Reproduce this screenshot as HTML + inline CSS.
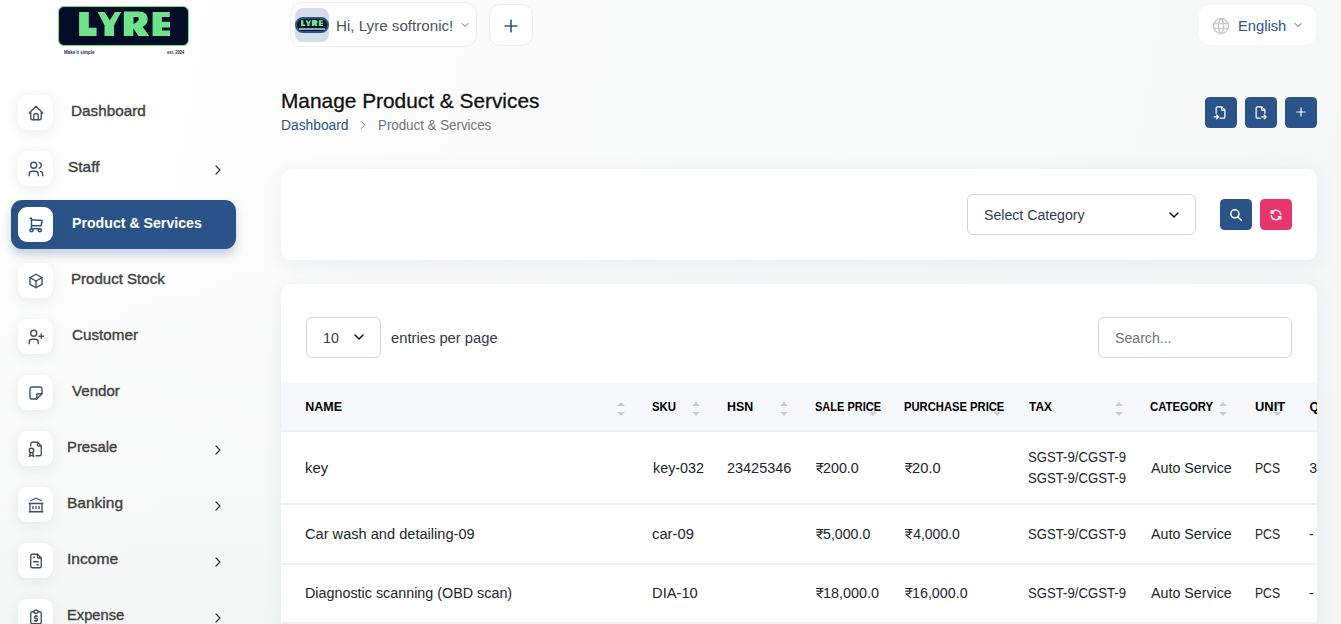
<!DOCTYPE html>
<html><head><meta charset="utf-8">
<style>*{box-sizing:border-box;margin:0;padding:0}
html,body{width:1341px;height:624px;overflow:hidden}
body{font-family:"Liberation Sans",sans-serif;background:linear-gradient(180deg,rgba(245,247,246,0) 30%,rgba(245,247,246,1) 100%),linear-gradient(100deg,#ffffff 0%,#fcfcfc 30%,#f9fafa 55%,#f6f8f8 100%);position:relative;color:#333}
.abs{position:absolute}
.t{position:absolute;white-space:nowrap;transform-origin:0 0}
.side{display:none}
.logo{position:absolute;left:58px;top:6px;width:131px;height:40px;background:#050c28;border:1.5px solid #6fe37b;border-radius:6px}
.tag{position:absolute;top:50px;font-size:4.6px;line-height:5px;color:#333a55}
.ibox{position:absolute;left:18px;width:35px;height:35px;border-radius:9px;background:#fff;box-shadow:0 3px 14px rgba(20,30,60,0.075)}
.ibox svg{position:absolute;left:8.5px;top:9.3px}
.active{position:absolute;left:11px;top:200px;width:225px;height:49px;background:#2a5489;border-radius:11px;box-shadow:0 6px 10px rgba(42,84,137,0.25)}
.pill{position:absolute;left:290px;top:2.4px;width:187px;height:45px;background:#fff;border:1px solid #eceef0;border-radius:12px}
.avatar{position:absolute;left:295px;top:7.8px;width:34px;height:34px;background:#d3dde7;border-radius:8px}
.plusbtn{position:absolute;left:488.5px;top:4.4px;width:44px;height:41.3px;background:#fff;border:1px solid #eeeff1;border-radius:11px}
.lang{position:absolute;left:1199px;top:4.8px;width:117px;height:40.3px;background:#fff;border-radius:12px}
.btn{position:absolute;width:32px;height:31px;background:#2a5489;border-radius:4.5px}
.card{position:absolute;background:#fff;border-radius:10px;box-shadow:0 4px 20px rgba(40,50,90,0.08)}
.sel{position:absolute;background:#fff;border:1px solid #cfd5dd;border-radius:6px}
</style></head><body>
<div class="side"></div>
<div class="logo"></div>
<svg class="abs" style="left:0;top:0" width="255" height="60" viewBox="0 0 255 60"><g fill="#6fe38a"><path d="M79.1 12.1H88.8V27.8H96.6V36H79.1Z"/><path d="M97.7 12.1H104.5L109.8 20.2L114.9 12.1H121.2L114.1 25.2V36H104.5V25.2Z"/><path fill-rule="evenodd" d="M123.8 11.6H138.5C144.8 11.6 147.7 14.6 147.7 19C147.7 23 145.4 25.6 142.6 26.8L149.2 36H138.4L133.4 28.2V36H123.8Z M133.5 17.4C135.6 16.9 138.8 16.6 138.8 18.6C138.8 21 135.8 23.3 133.5 23.9Z"/><path d="M152.6 12.1H169.7V17H161.9V21.8H170V27.4H161.9V30.4H170V36H152.6Z"/></g></svg>
<div class="t" style="left:63.71px;top:49.07px;font-size:5px;line-height:6px;color:#2b3150;font-weight:bold;transform:scaleX(0.8909);">Make it simple</div>
<div class="t" style="left:167.14px;top:49.07px;font-size:5px;line-height:6px;color:#2b3150;font-weight:bold;transform:scaleX(0.8134);">est. 2024</div>
<div class="active"></div>
<div class="ibox" style="top:95px"><svg viewBox="0 0 24 24" width="18" height="18" fill="none" stroke="#434e5e" stroke-width="1.8" stroke-linecap="round" stroke-linejoin="round" ><path d="M5 12l-2 0l9 -9l9 9l-2 0"/><path d="M5 12v7a2 2 0 0 0 2 2h10a2 2 0 0 0 2 -2v-7"/><path d="M9 21v-6a2 2 0 0 1 2 -2h2a2 2 0 0 1 2 2v6"/></svg></div>
<div class="t" style="left:71.48px;top:101.75px;font-size:14.3px;line-height:19px;color:#404040;transform:scaleX(1.0685);-webkit-text-stroke:0.35px #404040;">Dashboard</div>
<div class="ibox" style="top:151px"><svg viewBox="0 0 24 24" width="18" height="18" fill="none" stroke="#434e5e" stroke-width="1.8" stroke-linecap="round" stroke-linejoin="round" ><path d="M5 7a4 4 0 1 0 8 0a4 4 0 1 0 -8 0"/><path d="M3 21v-2a4 4 0 0 1 4 -4h4a4 4 0 0 1 4 4v2"/><path d="M16 3.13a4 4 0 0 1 0 7.75"/><path d="M21 21v-2a4 4 0 0 0 -3 -3.85"/></svg></div>
<div class="t" style="left:67.71px;top:157.75px;font-size:14.3px;line-height:19px;color:#404040;transform:scaleX(1.0796);-webkit-text-stroke:0.35px #404040;">Staff</div>
<div class="abs" style="left:210px;top:162px;"><svg viewBox="0 0 24 24" width="16" height="16" fill="none" stroke="#333" stroke-width="1.8" stroke-linecap="round" stroke-linejoin="round" ><path d="M9 6l6 6l-6 6"/></svg></div>
<div class="ibox" style="top:207px"><svg viewBox="0 0 24 24" width="18" height="18" fill="none" stroke="#2a5489" stroke-width="2" stroke-linecap="round" stroke-linejoin="round" ><path d="M4 19a2 2 0 1 0 4 0a2 2 0 1 0 -4 0"/><path d="M15 19a2 2 0 1 0 4 0a2 2 0 1 0 -4 0"/><path d="M17 17h-11v-14h-2"/><path d="M6 5l14 1l-1 7h-13"/></svg></div>
<div class="t" style="left:71.78px;top:214.35px;font-size:14px;line-height:18px;color:#fff;font-weight:bold;transform:scaleX(1.0110);">Product &amp; Services</div>
<div class="ibox" style="top:263px"><svg viewBox="0 0 24 24" width="18" height="18" fill="none" stroke="#434e5e" stroke-width="1.8" stroke-linecap="round" stroke-linejoin="round" ><path d="M12 3l8 4.5l0 9l-8 4.5l-8 -4.5l0 -9l8 -4.5"/><path d="M12 12l8 -4.5"/><path d="M12 12l0 9"/><path d="M12 12l-8 -4.5"/></svg></div>
<div class="t" style="left:71.30px;top:269.75px;font-size:14.3px;line-height:19px;color:#404040;transform:scaleX(1.0526);-webkit-text-stroke:0.35px #404040;">Product Stock</div>
<div class="ibox" style="top:319px"><svg viewBox="0 0 24 24" width="18" height="18" fill="none" stroke="#434e5e" stroke-width="1.8" stroke-linecap="round" stroke-linejoin="round" ><path d="M5 7a4 4 0 1 0 8 0a4 4 0 1 0 -8 0"/><path d="M3 21v-2a4 4 0 0 1 4 -4h4a4 4 0 0 1 4 4v2"/><path d="M16 11h6m-3 -3v6"/></svg></div>
<div class="t" style="left:71.74px;top:325.75px;font-size:14.3px;line-height:19px;color:#404040;transform:scaleX(1.0641);-webkit-text-stroke:0.35px #404040;">Customer</div>
<div class="ibox" style="top:375px"><svg viewBox="0 0 24 24" width="18" height="18" fill="none" stroke="#434e5e" stroke-width="1.8" stroke-linecap="round" stroke-linejoin="round" ><path d="M13 20l7 -7"/><path d="M13 20v-6a1 1 0 0 1 1 -1h6v-7a2 2 0 0 0 -2 -2h-12a2 2 0 0 0 -2 2v12a2 2 0 0 0 2 2h7"/></svg></div>
<div class="t" style="left:72.42px;top:381.75px;font-size:14.3px;line-height:19px;color:#404040;transform:scaleX(1.0562);-webkit-text-stroke:0.35px #404040;">Vendor</div>
<div class="ibox" style="top:431px"><svg viewBox="0 0 24 24" width="18" height="18" fill="none" stroke="#434e5e" stroke-width="1.8" stroke-linecap="round" stroke-linejoin="round" ><path d="M14 3v4a1 1 0 0 0 1 1h4"/><path d="M5 8v-3a2 2 0 0 1 2 -2h7l5 5v11a2 2 0 0 1 -2 2h-5"/><path d="M3 14a3 3 0 1 0 6 0a3 3 0 1 0 -6 0"/><path d="M4.5 17l-1.5 5l3 -1.5l3 1.5l-1.5 -5"/></svg></div>
<div class="t" style="left:67.21px;top:437.75px;font-size:14.3px;line-height:19px;color:#404040;transform:scaleX(1.0388);-webkit-text-stroke:0.35px #404040;">Presale</div>
<div class="abs" style="left:210px;top:442px;"><svg viewBox="0 0 24 24" width="16" height="16" fill="none" stroke="#333" stroke-width="1.8" stroke-linecap="round" stroke-linejoin="round" ><path d="M9 6l6 6l-6 6"/></svg></div>
<div class="ibox" style="top:487px"><svg viewBox="0 0 24 24" width="18" height="18" fill="none" stroke="#434e5e" stroke-width="1.8" stroke-linecap="round" stroke-linejoin="round" ><path d="M3 21l18 0"/><path d="M3 10l18 0"/><path d="M5 6l7 -3l7 3"/><path d="M4 10l0 11"/><path d="M20 10l0 11"/><path d="M8 14l0 3"/><path d="M12 14l0 3"/><path d="M16 14l0 3"/></svg></div>
<div class="t" style="left:67.16px;top:493.75px;font-size:14.3px;line-height:19px;color:#404040;transform:scaleX(1.0842);-webkit-text-stroke:0.35px #404040;">Banking</div>
<div class="abs" style="left:210px;top:498px;"><svg viewBox="0 0 24 24" width="16" height="16" fill="none" stroke="#333" stroke-width="1.8" stroke-linecap="round" stroke-linejoin="round" ><path d="M9 6l6 6l-6 6"/></svg></div>
<div class="ibox" style="top:543px"><svg viewBox="0 0 24 24" width="18" height="18" fill="none" stroke="#434e5e" stroke-width="1.8" stroke-linecap="round" stroke-linejoin="round" ><path d="M14 3v4a1 1 0 0 0 1 1h4"/><path d="M17 21h-10a2 2 0 0 1 -2 -2v-14a2 2 0 0 1 2 -2h7l5 5v11a2 2 0 0 1 -2 2z"/><path d="M9 7l1 0"/><path d="M9 13l6 0"/><path d="M13 17l2 0"/></svg></div>
<div class="t" style="left:67.00px;top:549.75px;font-size:14.3px;line-height:19px;color:#404040;transform:scaleX(1.0895);-webkit-text-stroke:0.35px #404040;">Income</div>
<div class="abs" style="left:210px;top:554px;"><svg viewBox="0 0 24 24" width="16" height="16" fill="none" stroke="#333" stroke-width="1.8" stroke-linecap="round" stroke-linejoin="round" ><path d="M9 6l6 6l-6 6"/></svg></div>
<div class="ibox" style="top:599px"><svg viewBox="0 0 24 24" width="18" height="18" fill="none" stroke="#434e5e" stroke-width="1.8" stroke-linecap="round" stroke-linejoin="round" ><path d="M9 5h-2a2 2 0 0 0 -2 2v12a2 2 0 0 0 2 2h10a2 2 0 0 0 2 -2v-12a2 2 0 0 0 -2 -2h-2"/><path d="M9 5a2 2 0 0 1 2 -2h2a2 2 0 0 1 2 2v0a2 2 0 0 1 -2 2h-2a2 2 0 0 1 -2 -2z"/><path d="M14 11h-2.5a1.5 1.5 0 0 0 0 3h1a1.5 1.5 0 0 1 0 3h-2.5"/><path d="M12 17v1m0 -8v1"/></svg></div>
<div class="t" style="left:67.22px;top:605.75px;font-size:14.3px;line-height:19px;color:#404040;transform:scaleX(1.0271);-webkit-text-stroke:0.35px #404040;">Expense</div>
<div class="abs" style="left:210px;top:610px;"><svg viewBox="0 0 24 24" width="16" height="16" fill="none" stroke="#333" stroke-width="1.8" stroke-linecap="round" stroke-linejoin="round" ><path d="M9 6l6 6l-6 6"/></svg></div>
<div class="pill"></div>
<div class="avatar"></div>
<div class="abs" style="left:295px;top:17px;width:34px;height:15.6px;border-radius:8px;background:#07142a;border:2px solid #2a5489;overflow:hidden"><div class="abs" style="left:2px;right:2px;bottom:1px;height:1.2px;background:#8fa3b8"></div></div>
<svg class="abs" style="left:301px;top:19.8px" width="22" height="6.6" viewBox="79 11.6 91 24.4" preserveAspectRatio="none"><g fill="#6fe38a"><path d="M79.1 12.1H88.8V27.8H96.6V36H79.1Z"/><path d="M97.7 12.1H104.5L109.8 20.2L114.9 12.1H121.2L114.1 25.2V36H104.5V25.2Z"/><path d="M123.8 11.6H138.5C144.8 11.6 147.7 14.6 147.7 19C147.7 23 145.4 25.6 142.6 26.8L149.2 36H138.4L133.4 28.2V36H123.8Z"/><path d="M152.6 12.1H169.7V17H161.9V21.8H170V27.4H161.9V30.4H170V36H152.6Z"/></g></svg>
<div class="t" style="left:336.29px;top:15.70px;font-size:15px;line-height:20px;color:#4b5563;transform:scaleX(1.0101);">Hi, Lyre softronic!</div>
<div class="abs" style="left:459.3px;top:17.4px;"><svg viewBox="0 0 24 24" width="12" height="12" fill="none" stroke="#50586a" stroke-width="1.7" stroke-linecap="round" stroke-linejoin="round" ><path d="M6 9l6 6l6 -6"/></svg></div>
<div class="plusbtn"></div>
<div class="abs" style="left:500.6px;top:16px;"><svg viewBox="0 0 24 24" width="20" height="20" fill="none" stroke="#2a5489" stroke-width="1.9" stroke-linecap="round" stroke-linejoin="round" ><path d="M12 5l0 14"/><path d="M5 12l14 0"/></svg></div>
<div class="lang"></div>
<div class="abs" style="left:1210.5px;top:16px;"><svg viewBox="0 0 24 24" width="20" height="20" fill="none" stroke="#c9c9c9" stroke-width="1.7" stroke-linecap="round" stroke-linejoin="round" ><path d="M3 12a9 9 0 1 0 18 0a9 9 0 0 0 -18 0"/><path d="M3.6 9h16.8"/><path d="M3.6 15h16.8"/><path d="M11.5 3a17 17 0 0 0 0 18"/><path d="M12.5 3a17 17 0 0 1 0 18"/></svg></div>
<div class="t" style="left:1237.92px;top:16.87px;font-size:14.8px;line-height:19px;color:#2a5489;transform:scaleX(0.9936);">English</div>
<div class="abs" style="left:1292px;top:17.3px;"><svg viewBox="0 0 24 24" width="12" height="12" fill="none" stroke="#454a55" stroke-width="1.8" stroke-linecap="round" stroke-linejoin="round" ><path d="M6 9l6 6l6 -6"/></svg></div>
<div class="t" style="left:280.83px;top:88.14px;font-size:19.8px;line-height:26px;color:#111;transform:scaleX(1.0541);-webkit-text-stroke:0.3px #111;">Manage Product &amp; Services</div>
<div class="t" style="left:280.90px;top:116.05px;font-size:14px;line-height:18px;color:#2a5489;transform:scaleX(0.9860);">Dashboard</div>
<div class="abs" style="left:355.8px;top:118px;"><svg viewBox="0 0 24 24" width="14" height="14" fill="none" stroke="#6c757d" stroke-width="1.5" stroke-linecap="round" stroke-linejoin="round" ><path d="M9 6l6 6l-6 6"/></svg></div>
<div class="t" style="left:377.63px;top:116.05px;font-size:14px;line-height:18px;color:#6c757d;transform:scaleX(0.9510);">Product &amp; Services</div>
<div class="btn" style="left:1205px;top:97px"><div class="abs" style="left:8.2px;top:8px"><svg viewBox="0 0 24 24" width="15" height="15" fill="none" stroke="#fff" stroke-width="2" stroke-linecap="round" stroke-linejoin="round" ><path d="M14 3v4a1 1 0 0 0 1 1h4"/><path d="M5 13v-8a2 2 0 0 1 2 -2h7l5 5v11a2 2 0 0 1 -2 2h-5.5m-9.5 -2h7m-3 -3l3 3l-3 3"/></svg></div></div>
<div class="btn" style="left:1245px;top:97px"><div class="abs" style="left:8.2px;top:8px"><svg viewBox="0 0 24 24" width="15" height="15" fill="none" stroke="#fff" stroke-width="2" stroke-linecap="round" stroke-linejoin="round" ><path d="M14 3v4a1 1 0 0 0 1 1h4"/><path d="M11.5 21h-4.5a2 2 0 0 1 -2 -2v-14a2 2 0 0 1 2 -2h7l5 5v5m-5 6h7m-3 -3l3 3l-3 3"/></svg></div></div>
<div class="btn" style="left:1285px;top:97px"><div class="abs" style="left:9px;top:8.3px"><svg viewBox="0 0 24 24" width="14" height="14" fill="none" stroke="#fff" stroke-width="2.1" stroke-linecap="round" stroke-linejoin="round" ><path d="M12 5l0 14"/><path d="M5 12l14 0"/></svg></div></div>
<div class="card" style="left:281px;top:169px;width:1036px;height:91px"></div>
<div class="sel" style="left:967px;top:194px;width:229px;height:41px"></div>
<div class="t" style="left:984.06px;top:205.85px;font-size:14px;line-height:18px;color:#333a47;transform:scaleX(1.0100);">Select Category</div>
<div class="abs" style="left:1166px;top:207px;"><svg viewBox="0 0 24 24" width="16" height="16" fill="none" stroke="#111" stroke-width="2.2" stroke-linecap="round" stroke-linejoin="round" ><path d="M6 9l6 6l6 -6"/></svg></div>
<div class="btn" style="left:1220px;top:199px"><div class="abs" style="left:9px;top:8.5px"><svg viewBox="0 0 24 24" width="14" height="14" fill="none" stroke="#fff" stroke-width="2.6" stroke-linecap="round" stroke-linejoin="round" ><path d="M3 10a7 7 0 1 0 14 0a7 7 0 1 0 -14 0"/><path d="M21 21l-6 -6"/></svg></div></div>
<div class="btn" style="left:1260px;top:199px;background:#e8356d"><div class="abs" style="left:9px;top:8.5px"><svg viewBox="0 0 24 24" width="14" height="14" fill="none" stroke="#fff" stroke-width="2.4" stroke-linecap="round" stroke-linejoin="round" ><path d="M20 11a8.1 8.1 0 0 0 -15.5 -2m-.5 -4v4h4"/><path d="M4 13a8.1 8.1 0 0 0 15.5 2m.5 4v-4h-4"/></svg></div></div>
<div class="card" style="left:281px;top:284px;width:1036px;height:360px"></div>
<div class="sel" style="left:306px;top:317px;width:75px;height:41px"></div>
<div class="t" style="left:323.13px;top:329.15px;font-size:14px;line-height:18px;color:#333a47;transform:scaleX(1.0194);">10</div>
<div class="abs" style="left:351px;top:329px;"><svg viewBox="0 0 24 24" width="16" height="16" fill="none" stroke="#111" stroke-width="2.2" stroke-linecap="round" stroke-linejoin="round" ><path d="M6 9l6 6l6 -6"/></svg></div>
<div class="t" style="left:390.84px;top:329.15px;font-size:14px;line-height:18px;color:#333a47;transform:scaleX(1.0542);">entries per page</div>
<div class="sel" style="left:1098px;top:317px;width:194px;height:41px"></div>
<div class="t" style="left:1114.76px;top:329.05px;font-size:14px;line-height:18px;color:#6b7280;transform:scaleX(1.0091);">Search...</div>
<div class="abs" style="left:0;top:0;width:1317px;height:624px;overflow:hidden">
<div class="abs" style="left:281px;top:383px;width:1036px;height:47px;background:#f6f8fc"></div>
<div class="abs" style="left:281px;top:430px;width:1036px;height:2px;background:#efefef"></div>
<div class="abs" style="left:617px;top:402.4px;width:0;height:0;border-left:4px solid transparent;border-right:4px solid transparent;border-bottom:4px solid #c9cbcf"></div><div class="abs" style="left:617px;top:412px;width:0;height:0;border-left:4px solid transparent;border-right:4px solid transparent;border-top:4px solid #c9cbcf"></div>
<div class="t" style="left:305.19px;top:398.57px;font-size:12.5px;line-height:16px;color:#000;font-weight:bold;">NAME</div>
<div class="abs" style="left:692px;top:402.4px;width:0;height:0;border-left:4px solid transparent;border-right:4px solid transparent;border-bottom:4px solid #c9cbcf"></div><div class="abs" style="left:692px;top:412px;width:0;height:0;border-left:4px solid transparent;border-right:4px solid transparent;border-top:4px solid #c9cbcf"></div>
<div class="t" style="left:652.46px;top:398.57px;font-size:12.5px;line-height:16px;color:#000;font-weight:bold;transform:scaleX(0.9109);">SKU</div>
<div class="abs" style="left:780px;top:402.4px;width:0;height:0;border-left:4px solid transparent;border-right:4px solid transparent;border-bottom:4px solid #c9cbcf"></div><div class="abs" style="left:780px;top:412px;width:0;height:0;border-left:4px solid transparent;border-right:4px solid transparent;border-top:4px solid #c9cbcf"></div>
<div class="t" style="left:727.10px;top:398.57px;font-size:12.5px;line-height:16px;color:#000;font-weight:bold;transform:scaleX(0.9899);">HSN</div>
<div class="abs" style="left:869px;top:402.4px;width:0;height:0;border-left:4px solid transparent;border-right:4px solid transparent;border-bottom:4px solid #c9cbcf"></div><div class="abs" style="left:869px;top:412px;width:0;height:0;border-left:4px solid transparent;border-right:4px solid transparent;border-top:4px solid #c9cbcf"></div>
<div class="t" style="left:815.37px;top:398.57px;font-size:12.5px;line-height:16px;color:#000;font-weight:bold;transform:scaleX(0.8802);">SALE PRICE</div>
<div class="abs" style="left:993px;top:402.4px;width:0;height:0;border-left:4px solid transparent;border-right:4px solid transparent;border-bottom:4px solid #c9cbcf"></div><div class="abs" style="left:993px;top:412px;width:0;height:0;border-left:4px solid transparent;border-right:4px solid transparent;border-top:4px solid #c9cbcf"></div>
<div class="t" style="left:904.37px;top:398.57px;font-size:12.5px;line-height:16px;color:#000;font-weight:bold;transform:scaleX(0.8972);">PURCHASE PRICE</div>
<div class="abs" style="left:1115px;top:402.4px;width:0;height:0;border-left:4px solid transparent;border-right:4px solid transparent;border-bottom:4px solid #c9cbcf"></div><div class="abs" style="left:1115px;top:412px;width:0;height:0;border-left:4px solid transparent;border-right:4px solid transparent;border-top:4px solid #c9cbcf"></div>
<div class="t" style="left:1028.98px;top:398.57px;font-size:12.5px;line-height:16px;color:#000;font-weight:bold;transform:scaleX(0.9533);">TAX</div>
<div class="abs" style="left:1218.7px;top:402.4px;width:0;height:0;border-left:4px solid transparent;border-right:4px solid transparent;border-bottom:4px solid #c9cbcf"></div><div class="abs" style="left:1218.7px;top:412px;width:0;height:0;border-left:4px solid transparent;border-right:4px solid transparent;border-top:4px solid #c9cbcf"></div>
<div class="t" style="left:1150.45px;top:398.57px;font-size:12.5px;line-height:16px;color:#000;font-weight:bold;transform:scaleX(0.9091);">CATEGORY</div>
<div class="abs" style="left:1272.5px;top:402.4px;width:0;height:0;border-left:4px solid transparent;border-right:4px solid transparent;border-bottom:4px solid #c9cbcf"></div><div class="abs" style="left:1272.5px;top:412px;width:0;height:0;border-left:4px solid transparent;border-right:4px solid transparent;border-top:4px solid #c9cbcf"></div>
<div class="t" style="left:1255.02px;top:398.57px;font-size:12.5px;line-height:16px;color:#000;font-weight:bold;transform:scaleX(1.0336);">UNIT</div>
<div class="t" style="left:1309.50px;top:398.57px;font-size:12.5px;line-height:16px;color:#000;font-weight:bold;">Q</div>
<div class="abs" style="left:281px;top:503px;width:1036px;height:2px;background:#efefef"></div>
<div class="abs" style="left:281px;top:562.5px;width:1036px;height:2px;background:#efefef"></div>
<div class="abs" style="left:281px;top:621.5px;width:1036px;height:2px;background:#efefef"></div>
<div class="t" style="left:305.34px;top:459.05px;font-size:14px;line-height:18px;color:#212529;transform:scaleX(1.0582);">key</div>
<div class="t" style="left:652.67px;top:459.05px;font-size:14px;line-height:18px;color:#212529;transform:scaleX(1.0237);">key-032</div>
<div class="t" style="left:727.18px;top:459.05px;font-size:14px;line-height:18px;color:#212529;transform:scaleX(1.0317);">23425346</div>
<div class="abs" style="left:815.8px;top:463px;width:8px;height:11px"><svg width="8" height="11" viewBox="0 0 8 11" fill="none" stroke="#212529" stroke-width="1.05" style="position:absolute;left:0;top:0"><path d="M0.3 0.5H7.4M0.3 3.1H7.4"/><path d="M0.7 0.5H2.7C5.9 0.5 5.9 5.8 2.7 5.8H0.9L6.2 10.2" stroke-linejoin="round"/></svg></div>
<div class="t" style="left:823.19px;top:459.05px;font-size:14px;line-height:18px;color:#212529;transform:scaleX(1.0196);">200.0</div>
<div class="abs" style="left:905px;top:463px;width:8px;height:11px"><svg width="8" height="11" viewBox="0 0 8 11" fill="none" stroke="#212529" stroke-width="1.05" style="position:absolute;left:0;top:0"><path d="M0.3 0.5H7.4M0.3 3.1H7.4"/><path d="M0.7 0.5H2.7C5.9 0.5 5.9 5.8 2.7 5.8H0.9L6.2 10.2" stroke-linejoin="round"/></svg></div>
<div class="t" style="left:912.36px;top:459.05px;font-size:14px;line-height:18px;color:#212529;transform:scaleX(1.0512);">20.0</div>
<div class="t" style="left:1028.41px;top:448.15px;font-size:14px;line-height:18px;color:#212529;transform:scaleX(0.9401);">SGST-9/CGST-9</div>
<div class="t" style="left:1028.41px;top:468.75px;font-size:14px;line-height:18px;color:#212529;transform:scaleX(0.9401);">SGST-9/CGST-9</div>
<div class="t" style="left:1150.83px;top:459.05px;font-size:14px;line-height:18px;color:#212529;transform:scaleX(1.0180);">Auto Service</div>
<div class="t" style="left:1255.03px;top:459.05px;font-size:14px;line-height:18px;color:#212529;transform:scaleX(0.8697);">PCS</div>
<div class="t" style="left:1309.14px;top:459.05px;font-size:14px;line-height:18px;color:#212529;">3</div>
<div class="t" style="left:305.37px;top:525.15px;font-size:14px;line-height:18px;color:#212529;transform:scaleX(1.0429);">Car wash and detailing-09</div>
<div class="t" style="left:652.03px;top:525.15px;font-size:14px;line-height:18px;color:#212529;transform:scaleX(1.0565);">car-09</div>
<div class="abs" style="left:815.7px;top:529px;width:8px;height:11px"><svg width="8" height="11" viewBox="0 0 8 11" fill="none" stroke="#212529" stroke-width="1.05" style="position:absolute;left:0;top:0"><path d="M0.3 0.5H7.4M0.3 3.1H7.4"/><path d="M0.7 0.5H2.7C5.9 0.5 5.9 5.8 2.7 5.8H0.9L6.2 10.2" stroke-linejoin="round"/></svg></div>
<div class="t" style="left:823.23px;top:525.15px;font-size:14px;line-height:18px;color:#212529;transform:scaleX(1.0116);">5,000.0</div>
<div class="abs" style="left:905.4px;top:529px;width:8px;height:11px"><svg width="8" height="11" viewBox="0 0 8 11" fill="none" stroke="#212529" stroke-width="1.05" style="position:absolute;left:0;top:0"><path d="M0.3 0.5H7.4M0.3 3.1H7.4"/><path d="M0.7 0.5H2.7C5.9 0.5 5.9 5.8 2.7 5.8H0.9L6.2 10.2" stroke-linejoin="round"/></svg></div>
<div class="t" style="left:913.15px;top:525.15px;font-size:14px;line-height:18px;color:#212529;">4,000.0</div>
<div class="t" style="left:1028.41px;top:525.15px;font-size:14px;line-height:18px;color:#212529;transform:scaleX(0.9401);">SGST-9/CGST-9</div>
<div class="t" style="left:1150.83px;top:525.15px;font-size:14px;line-height:18px;color:#212529;transform:scaleX(1.0180);">Auto Service</div>
<div class="t" style="left:1255.03px;top:525.15px;font-size:14px;line-height:18px;color:#212529;transform:scaleX(0.8697);">PCS</div>
<div class="t" style="left:1309.07px;top:525.15px;font-size:14px;line-height:18px;color:#212529;">-</div>
<div class="t" style="left:304.95px;top:584.35px;font-size:14px;line-height:18px;color:#212529;transform:scaleX(1.0238);">Diagnostic scanning (OBD scan)</div>
<div class="t" style="left:651.52px;top:584.35px;font-size:14px;line-height:18px;color:#212529;transform:scaleX(1.0511);">DIA-10</div>
<div class="abs" style="left:815.7px;top:588px;width:8px;height:11px"><svg width="8" height="11" viewBox="0 0 8 11" fill="none" stroke="#212529" stroke-width="1.05" style="position:absolute;left:0;top:0"><path d="M0.3 0.5H7.4M0.3 3.1H7.4"/><path d="M0.7 0.5H2.7C5.9 0.5 5.9 5.8 2.7 5.8H0.9L6.2 10.2" stroke-linejoin="round"/></svg></div>
<div class="t" style="left:822.72px;top:584.35px;font-size:14px;line-height:18px;color:#212529;transform:scaleX(1.0274);">18,000.0</div>
<div class="abs" style="left:905.4px;top:588px;width:8px;height:11px"><svg width="8" height="11" viewBox="0 0 8 11" fill="none" stroke="#212529" stroke-width="1.05" style="position:absolute;left:0;top:0"><path d="M0.3 0.5H7.4M0.3 3.1H7.4"/><path d="M0.7 0.5H2.7C5.9 0.5 5.9 5.8 2.7 5.8H0.9L6.2 10.2" stroke-linejoin="round"/></svg></div>
<div class="t" style="left:912.43px;top:584.35px;font-size:14px;line-height:18px;color:#212529;transform:scaleX(1.0199);">16,000.0</div>
<div class="t" style="left:1028.41px;top:584.35px;font-size:14px;line-height:18px;color:#212529;transform:scaleX(0.9401);">SGST-9/CGST-9</div>
<div class="t" style="left:1150.83px;top:584.35px;font-size:14px;line-height:18px;color:#212529;transform:scaleX(1.0180);">Auto Service</div>
<div class="t" style="left:1255.03px;top:584.35px;font-size:14px;line-height:18px;color:#212529;transform:scaleX(0.8697);">PCS</div>
<div class="t" style="left:1309.07px;top:584.35px;font-size:14px;line-height:18px;color:#212529;">-</div>
</div>
</body></html>
